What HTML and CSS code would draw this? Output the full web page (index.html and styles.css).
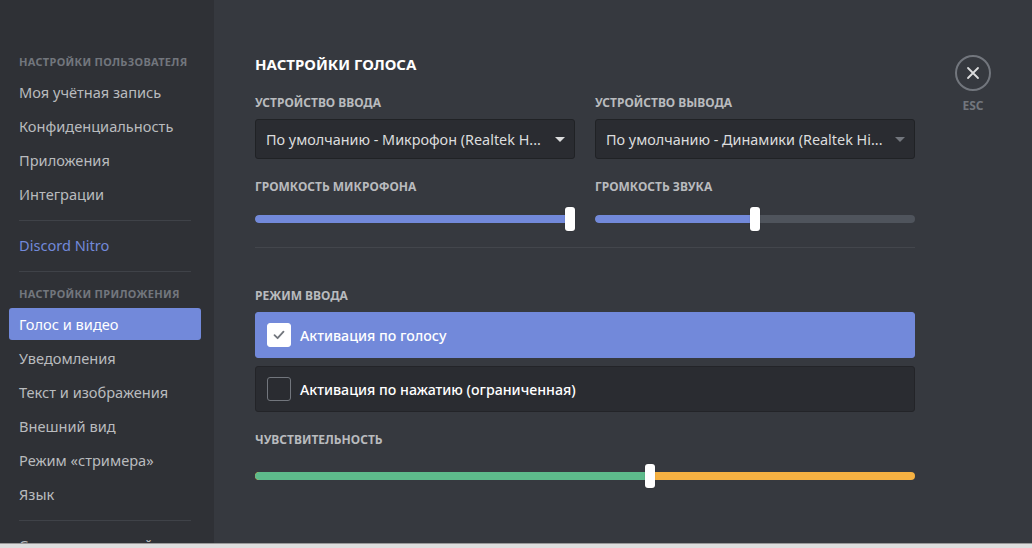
FILE: index.html
```html
<!DOCTYPE html>
<html lang="ru">
<head>
<meta charset="utf-8">
<title>Настройки голоса</title>
<link rel="stylesheet" href="styles.css">
</head>
<body>
<div class="app">
  <nav class="sidebar">
    <div class="side-header">Настройки пользователя</div>
    <div class="side-item">Моя учётная запись</div>
    <div class="side-item">Конфиденциальность</div>
    <div class="side-item">Приложения</div>
    <div class="side-item">Интеграции</div>
    <div class="side-sep"></div>
    <div class="side-item nitro">Discord Nitro</div>
    <div class="side-sep"></div>
    <div class="side-header second">Настройки приложения</div>
    <div class="side-item selected">Голос и видео</div>
    <div class="side-item">Уведомления</div>
    <div class="side-item">Текст и изображения</div>
    <div class="side-item">Внешний вид</div>
    <div class="side-item">Режим «стримера»</div>
    <div class="side-item">Язык</div>
    <div class="side-sep"></div>
    <div class="side-item">Список изменений</div>
  </nav>
  <main class="main">
    <div class="content">
      <h2 class="title">Настройки голоса</h2>
      <div class="row">
        <div class="col">
          <div class="label">Устройство ввода</div>
          <div class="select">
            <span class="select-text">По умолчанию - Микрофон (Realtek H...</span>
            <span class="arrow"></span>
          </div>
          <div class="label vol">Громкость микрофона</div>
          <div class="slider">
            <div class="track"><div class="fill" style="width:100%"></div></div>
            <div class="handle" style="left:310px"></div>
          </div>
        </div>
        <div class="col">
          <div class="label">Устройство вывода</div>
          <div class="select">
            <span class="select-text">По умолчанию - Динамики (Realtek Hi...</span>
            <span class="arrow dim"></span>
          </div>
          <div class="label vol">Громкость звука</div>
          <div class="slider">
            <div class="track"><div class="fill" style="width:50%"></div></div>
            <div class="handle" style="left:155px"></div>
          </div>
        </div>
      </div>
      <div class="divider"></div>
      <div class="label mode">Режим ввода</div>
      <div class="option active">
        <span class="checkbox checked">
          <svg width="14" height="14" viewBox="0 0 14 14"><path d="M2.5 7.2 L5.6 10.2 L11.5 3.6" fill="none" stroke="#72767d" stroke-width="1.8" stroke-linecap="round" stroke-linejoin="round"/></svg>
        </span>
        <span class="option-text">Активация по голосу</span>
      </div>
      <div class="option">
        <span class="checkbox"></span>
        <span class="option-text">Активация по нажатию (ограниченная)</span>
      </div>
      <div class="label sens">Чувствительность</div>
      <div class="slider sens-slider">
        <div class="track yellow"><div class="fill green" style="width:59.8%"></div></div>
        <div class="handle" style="left:390px"></div>
      </div>
    </div>
    <div class="close-col">
      <div class="close-btn">
        <svg width="14" height="14" viewBox="0 0 14 14"><path d="M2 2 L12 12 M12 2 L2 12" stroke="#dcddde" stroke-width="1.8" stroke-linecap="round"/></svg>
      </div>
      <div class="esc">ESC</div>
    </div>
  </main>
</div>
<div class="bottom-bar"></div>
</body>
</html>
```
FILE: styles.css
```css
* { box-sizing: border-box; }
html, body { margin: 0; padding: 0; }
body {
  width: 1032px;
  height: 548px;
  overflow: hidden;
  background: #36393f;
  font-family: "Noto Sans", "Open Sans", sans-serif;
  display: flex;
  flex-direction: column;
}
.app {
  display: flex;
  height: 543px;
  overflow: hidden;
}
.sidebar {
  width: 214px;
  flex: none;
  background: #2f3136;
  padding: 54px 13px 0 9px;
}
.side-header {
  font-size: 11px;
  line-height: 16px;
  font-weight: 700;
  text-transform: uppercase;
  letter-spacing: 0.3px;
  color: #72767d;
  padding-left: 10px;
  margin-bottom: 6px;
  white-space: nowrap;
}
.side-header.second { margin-top: 14px; }
.side-item {
  height: 32px;
  line-height: 32px;
  margin-bottom: 2px;
  padding-left: 10px;
  font-size: 14.6px;
  color: #b9bbbe;
  border-radius: 3px;
  white-space: nowrap;
}
.side-item.nitro { color: #7289da; }
.side-item.selected { background: #7289da; color: #fff; }
.side-sep {
  height: 1px;
  background: #3f4248;
  margin: 10px 10px 8px 10px;
}
.main {
  flex: 1;
  display: flex;
  padding: 54px 0 0 41px;
  background: #36393f;
}
.content { width: 660px; flex: none; }
.title {
  margin: 0;
  font-size: 15px;
  line-height: 20px;
  font-weight: 700;
  text-transform: uppercase;
  color: #fff;
}
.row { display: flex; gap: 20px; margin-top: 21px; }
.col { width: 320px; }
.label {
  font-size: 12px;
  line-height: 16px;
  font-weight: 700;
  text-transform: uppercase;
  color: #b9bbbe;
  margin-bottom: 8px;
}
.label.vol { margin-top: 20px; margin-bottom: 12px; }
.select {
  height: 40px;
  background: #2a2c31;
  border: 1px solid #202225;
  border-radius: 3px;
  display: flex;
  align-items: center;
  justify-content: space-between;
  padding: 0 9px 0 10px;
}
.select-text { font-size: 14.4px; color: #dcddde; white-space: nowrap; }
.arrow {
  width: 0; height: 0;
  border-left: 5px solid transparent;
  border-right: 5px solid transparent;
  border-top: 5px solid #dcddde;
}
.arrow.dim { border-top-color: #72767d; }
.slider { position: relative; height: 24px; }
.track {
  position: relative;
  top: 8px;
  height: 8px;
  border-radius: 4px;
  background: #4f545c;
  overflow: hidden;
}
.fill { height: 100%; background: #7289da; border-radius: 4px 0 0 4px; }
.track.yellow { background: #f6b142; }
.fill.green { background: #5dbb8b; border-radius: 4px 0 0 4px; }
.handle {
  position: absolute;
  top: 0;
  width: 10px;
  height: 24px;
  background: #fff;
  border-radius: 3px;
  box-shadow: 0 0 1px rgba(0,0,0,.4);
}
.divider { height: 1px; background: #43464c; margin-top: 16px; }
.label.mode { margin-top: 40px; }
.option {
  height: 46px;
  display: flex;
  align-items: center;
  padding-left: 11px;
  border-radius: 3px;
  background: #2a2c31;
  border: 1px solid #232428;
  margin-bottom: 8px;
}
.option.active { background: #7289da; border-color: #7289da; }
.checkbox {
  width: 24px;
  height: 24px;
  border-radius: 3px;
  border: 1px solid #72767d;
  display: flex;
  align-items: center;
  justify-content: center;
  flex: none;
}
.checkbox.checked { background: #fff; border-color: #fff; }
.option-text {
  margin-left: 9px;
  font-size: 14.2px;
  font-weight: 500;
  color: #fff;
}
.label.sens { margin-top: 20px; margin-bottom: 16px; }
.close-col {
  margin-left: 40px;
  display: flex;
  flex-direction: column;
  align-items: center;
  width: 36px;
  margin-top: 1px;
}
.close-btn {
  width: 36px;
  height: 36px;
  border-radius: 50%;
  border: 2px solid #72767d;
  display: flex;
  align-items: center;
  justify-content: center;
}
.esc {
  margin-top: 8px;
  font-size: 12px;
  font-weight: 700;
  color: #72767d;
  line-height: 14px;
}
.bottom-bar {
  height: 5px;
  background: #dedede;
  border-top: 1px solid #9a9a9a;
}
```
